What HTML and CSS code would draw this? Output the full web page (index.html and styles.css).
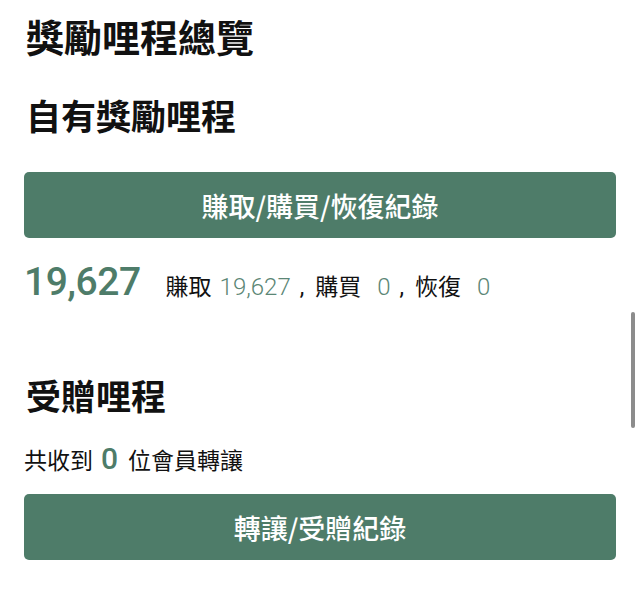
FILE: index.html
```html
<!DOCTYPE html>
<html lang="zh-Hant">
<head>
    <title>獎勵哩程總覽</title>
    <meta charset="UTF-8">
    <link rel="stylesheet" href="styles.css">
</head>
<body>
    <div class="container">
        <h1 class="page-title">獎勵哩程總覽</h1>

        <h2 class="section-title">自有獎勵哩程</h2>
        <button type="button" class="record-btn btn-own">賺取/購買/恢復紀錄</button>

        <div class="total-row">
            <span class="total-num">19,627</span>
            <span class="detail">
                <span class="label">賺取</span><span class="num num-earn">19,627</span><span class="sep">,</span><span class="label">購買</span><span class="num num-zero">0</span><span class="sep">,</span><span class="label">恢復</span><span class="num num-zero">0</span>
            </span>
        </div>

        <h2 class="section-title section-gift">受贈哩程</h2>
        <div class="gift-line">
            共收到<span class="gift-num">0</span>位會員轉讓
        </div>
        <button type="button" class="record-btn btn-gift">轉讓/受贈紀錄</button>
    </div>

    <div class="scroll-indicator"></div>
</body>
</html>
```

FILE: styles.css
```css
body {
    margin: 0;
    background-color: #ffffff;
    color: #111111;
    font-family: 'Noto Sans CJK TC', 'Noto Sans', sans-serif;
}
.container {
    padding: 12px 24px 0 24px;
}
.page-title {
    margin: 0;
    padding-left: 2px;
    font-size: 38px;
    line-height: 48px;
    font-weight: 700;
}
.section-title {
    margin: 32px 0 0 0;
    padding-left: 2px;
    font-size: 35px;
    line-height: 46px;
    font-weight: 700;
}
.section-gift {
    margin-top: 60px;
}
.record-btn {
    display: block;
    width: 100%;
    height: 66px;
    margin: 34px 0 0 0;
    border: none;
    border-radius: 5px;
    background-color: #4e7c69;
    color: #ffffff;
    font-family: 'Noto Sans CJK TC', 'Noto Sans', sans-serif;
    font-size: 27px;
    font-weight: 500;
    cursor: pointer;
}
.btn-gift {
    margin-top: 17px;
}
.total-row {
    display: flex;
    align-items: baseline;
    margin-top: 20px;
    line-height: 48px;
}
.total-num {
    font-family: Roboto, 'Liberation Sans', sans-serif;
    font-size: 39px;
    font-weight: 500;
    color: #4e7c69;
    letter-spacing: -0.5px;
}
.detail {
    margin-left: 25px;
    font-size: 23px;
}
.num {
    font-family: Roboto, 'Liberation Sans', sans-serif;
    font-size: 24px;
    font-weight: 300;
    color: #5b8675;
}
.num-earn {
    margin-left: 8px;
}
.num-zero {
    margin-left: 16px;
}
.sep {
    font-family: Roboto, 'Liberation Sans', sans-serif;
    margin: 0 11px 0 9px;
}
.gift-line {
    margin-top: 23px;
    font-size: 23px;
    line-height: 36px;
    height: 36px;
}
.gift-num {
    margin: 0 10px 0 8px;
    font-family: Roboto, 'Liberation Sans', sans-serif;
    font-size: 30px;
    line-height: 1;
    font-weight: 500;
    color: #4e7c69;
}
.scroll-indicator {
    position: absolute;
    top: 312px;
    left: 631px;
    width: 4px;
    height: 116px;
    border-radius: 2px;
    background-color: #8c8c8c;
}
```
